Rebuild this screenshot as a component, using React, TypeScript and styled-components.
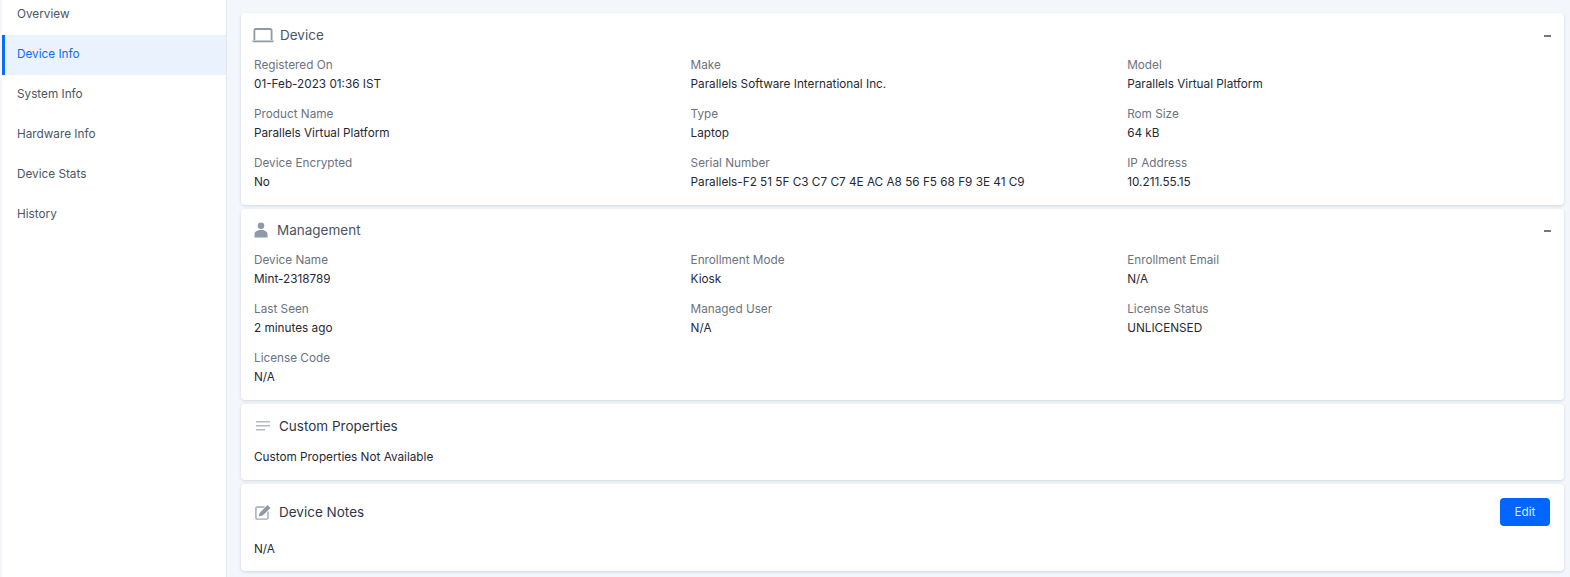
import React from "react";
import styled, { createGlobalStyle } from "styled-components";

const Global = createGlobalStyle`
  html, body { margin: 0; padding: 0; height: 100%; overflow: hidden; }
  body { font-family: Inter, "Liberation Sans", sans-serif; background: #f3f7fb; }
`;

const Page = styled.div`
  display: flex;
  height: 577px;
  padding-left: 2px;
  background: #f3f7fb;
  overflow: hidden;
`;

const Sidebar = styled.nav`
  flex: 0 0 224px;
  margin-top: -5px;
  height: 582px;
  background: #fff;
  border-right: 1px solid #e2e7ee;
`;

const NavItem = styled.div<{ $active?: boolean }>`
  display: flex;
  align-items: center;
  box-sizing: border-box;
  height: 40px;
  padding: 0 0 2px ${(p) => (p.$active ? "12px" : "15px")};
  font-size: 11.75px;
  color: ${(p) => (p.$active ? "#0b6bff" : "#4b5563")};
  background: ${(p) => (p.$active ? "#eaf3fd" : "transparent")};
  border-left: ${(p) => (p.$active ? "3px solid #0b6bff" : "none")};
`;

const Main = styled.main`
  flex: 1;
  display: flex;
  flex-direction: column;
  gap: 4px;
  padding: 13px 6px 0 14px;
`;

const Card = styled.section<{ $h: number }>`
  height: ${(p) => p.$h}px;
  flex: none;
  box-sizing: border-box;
  background: #fff;
  border-radius: 4px;
  box-shadow: 0 1px 3px rgba(60, 80, 110, 0.2);
  padding: 0 13px;
`;

const Head = styled.div<{ $h: number }>`
  display: flex;
  align-items: center;
  height: ${(p) => p.$h}px;
`;

const IconSlot = styled.span<{ $w: number; $x?: number }>`
  display: flex;
  align-items: center;
  flex: 0 0 ${(p) => p.$w}px;
  margin-left: ${(p) => p.$x ?? 0}px;
`;

const Title = styled.h2<{ $dark?: boolean }>`
  margin: 0;
  flex: 1;
  font-size: 13.5px;
  font-weight: 400;
  color: ${(p) => (p.$dark ? "#2f3746" : "#4b5563")};
`;

const Collapse = styled.span`
  width: 7px;
  height: 2px;
  margin-top: 2px;
  background: #777;
`;

const Fields = styled.div<{ $top: number }>`
  display: grid;
  grid-template-columns: 436.6px 436.6px 1fr;
  grid-auto-rows: 49px;
  padding-top: ${(p) => p.$top}px;
`;

const Field = styled.div`
  display: flex;
  flex-direction: column;
  gap: 4px;
`;

const Label = styled.span`
  font-size: 11.75px;
  line-height: 15px;
  color: #6b7280;
`;

const Value = styled.span`
  font-size: 11.75px;
  line-height: 15px;
  color: #1f2937;
`;

const BodyText = styled.p<{ $top: number }>`
  margin: 0;
  padding-top: ${(p) => p.$top}px;
  font-size: 11.75px;
  line-height: 15px;
  color: #1f2937;
`;

const EditButton = styled.button`
  width: 50px;
  height: 28px;
  border: none;
  border-radius: 4px;
  background: #0066ff;
  color: #dfeaff;
  font: 400 11.75px Inter, sans-serif;
  margin-right: 1px;
`;

const Laptop = () => (
  <svg width="22" height="15" viewBox="0 0 22 15" fill="none">
    <path d="M2.400 12V2.200A1.200 1.200 0 0 1 3.600 1h14.800a1.200 1.200 0 0 1 1.200 1.200V12" stroke="#8f99a8" strokeWidth="1.800" />
    <path d="M0 12.400h22l-1 1.900H1z" fill="#8f99a8" />
  </svg>
);

const Person = () => (
  <svg width="14" height="16" viewBox="0 0 14 16" fill="#8f99a8">
    <circle cx="7" cy="3.700" r="3.300" />
    <path d="M.5 15.500v-3C.5 9.600 3 8 7 8s6.500 1.600 6.500 4.500v3z" />
  </svg>
);

const Lines = () => (
  <svg width="14" height="12" viewBox="0 0 14 12" fill="#b4bac4">
    <rect x="0" y="1" width="14" height="1.500" />
    <rect x="0" y="5" width="14" height="1.500" />
    <rect x="0" y="9" width="9" height="1.500" />
  </svg>
);

const Pencil = () => (
  <svg width="16" height="16" viewBox="0 0 16 16" fill="none">
    <path d="M9.500 3H2.200A1.300 1.300 0 0 0 .9 4.300v9.500a1.300 1.300 0 0 0 1.300 1.300h9.500a1.300 1.300 0 0 0 1.300-1.300V7.500" stroke="#a2a9b4" strokeWidth="1.400" />
    <path d="M3.700 12.400l.9-3.500L12.500 1l3 3-7.900 7.500z" fill="#8f99a8" />
  </svg>
);

type F = [string, string];

const device: F[] = [
  ["Registered On", "01-Feb-2023 01:36 IST"],
  ["Make", "Parallels Software International Inc."],
  ["Model", "Parallels Virtual Platform"],
  ["Product Name", "Parallels Virtual Platform"],
  ["Type", "Laptop"],
  ["Rom Size", "64 kB"],
  ["Device Encrypted", "No"],
  ["Serial Number", "Parallels-F2 51 5F C3 C7 C7 4E AC A8 56 F5 68 F9 3E 41 C9"],
  ["IP Address", "10.211.55.15"],
];

const management: F[] = [
  ["Device Name", "Mint-2318789"],
  ["Enrollment Mode", "Kiosk"],
  ["Enrollment Email", "N/A"],
  ["Last Seen", "2 minutes ago"],
  ["Managed User", "N/A"],
  ["License Status", "UNLICENSED"],
  ["License Code", "N/A"],
];

const FieldGrid = ({ items, top }: { items: F[]; top: number }) => (
  <Fields $top={top}>
    {items.map(([l, v]) => (
      <Field key={l}>
        <Label>{l}</Label>
        <Value>{v}</Value>
      </Field>
    ))}
  </Fields>
);

const nav = ["Overview", "Device Info", "System Info", "Hardware Info", "Device Stats", "History"];

export default function App() {
  return (
    <>
      <Global />
      <Page>
        <Sidebar>
          {nav.map((n) => (
            <NavItem key={n} $active={n === "Device Info"}>{n}</NavItem>
          ))}
        </Sidebar>
        <Main>
          <Card $h={192}>
            <Head $h={44}>
              <IconSlot $w={28} $x={-2}><Laptop /></IconSlot>
              <Title>Device</Title>
              <Collapse />
            </Head>
            <FieldGrid items={device} top={1} />
          </Card>
          <Card $h={191}>
            <Head $h={42}>
              <IconSlot $w={23}><Person /></IconSlot>
              <Title>Management</Title>
              <Collapse />
            </Head>
            <FieldGrid items={management} top={2} />
          </Card>
          <Card $h={76}>
            <Head $h={44}>
              <IconSlot $w={23} $x={2}><Lines /></IconSlot>
              <Title $dark>Custom Properties</Title>
            </Head>
            <BodyText $top={2}>Custom Properties Not Available</BodyText>
          </Card>
          <Card $h={87}>
            <Head $h={56}>
              <IconSlot $w={24} $x={1}><Pencil /></IconSlot>
              <Title $dark>Device Notes</Title>
              <EditButton>Edit</EditButton>
            </Head>
            <BodyText $top={2}>N/A</BodyText>
          </Card>
        </Main>
      </Page>
    </>
  );
}
